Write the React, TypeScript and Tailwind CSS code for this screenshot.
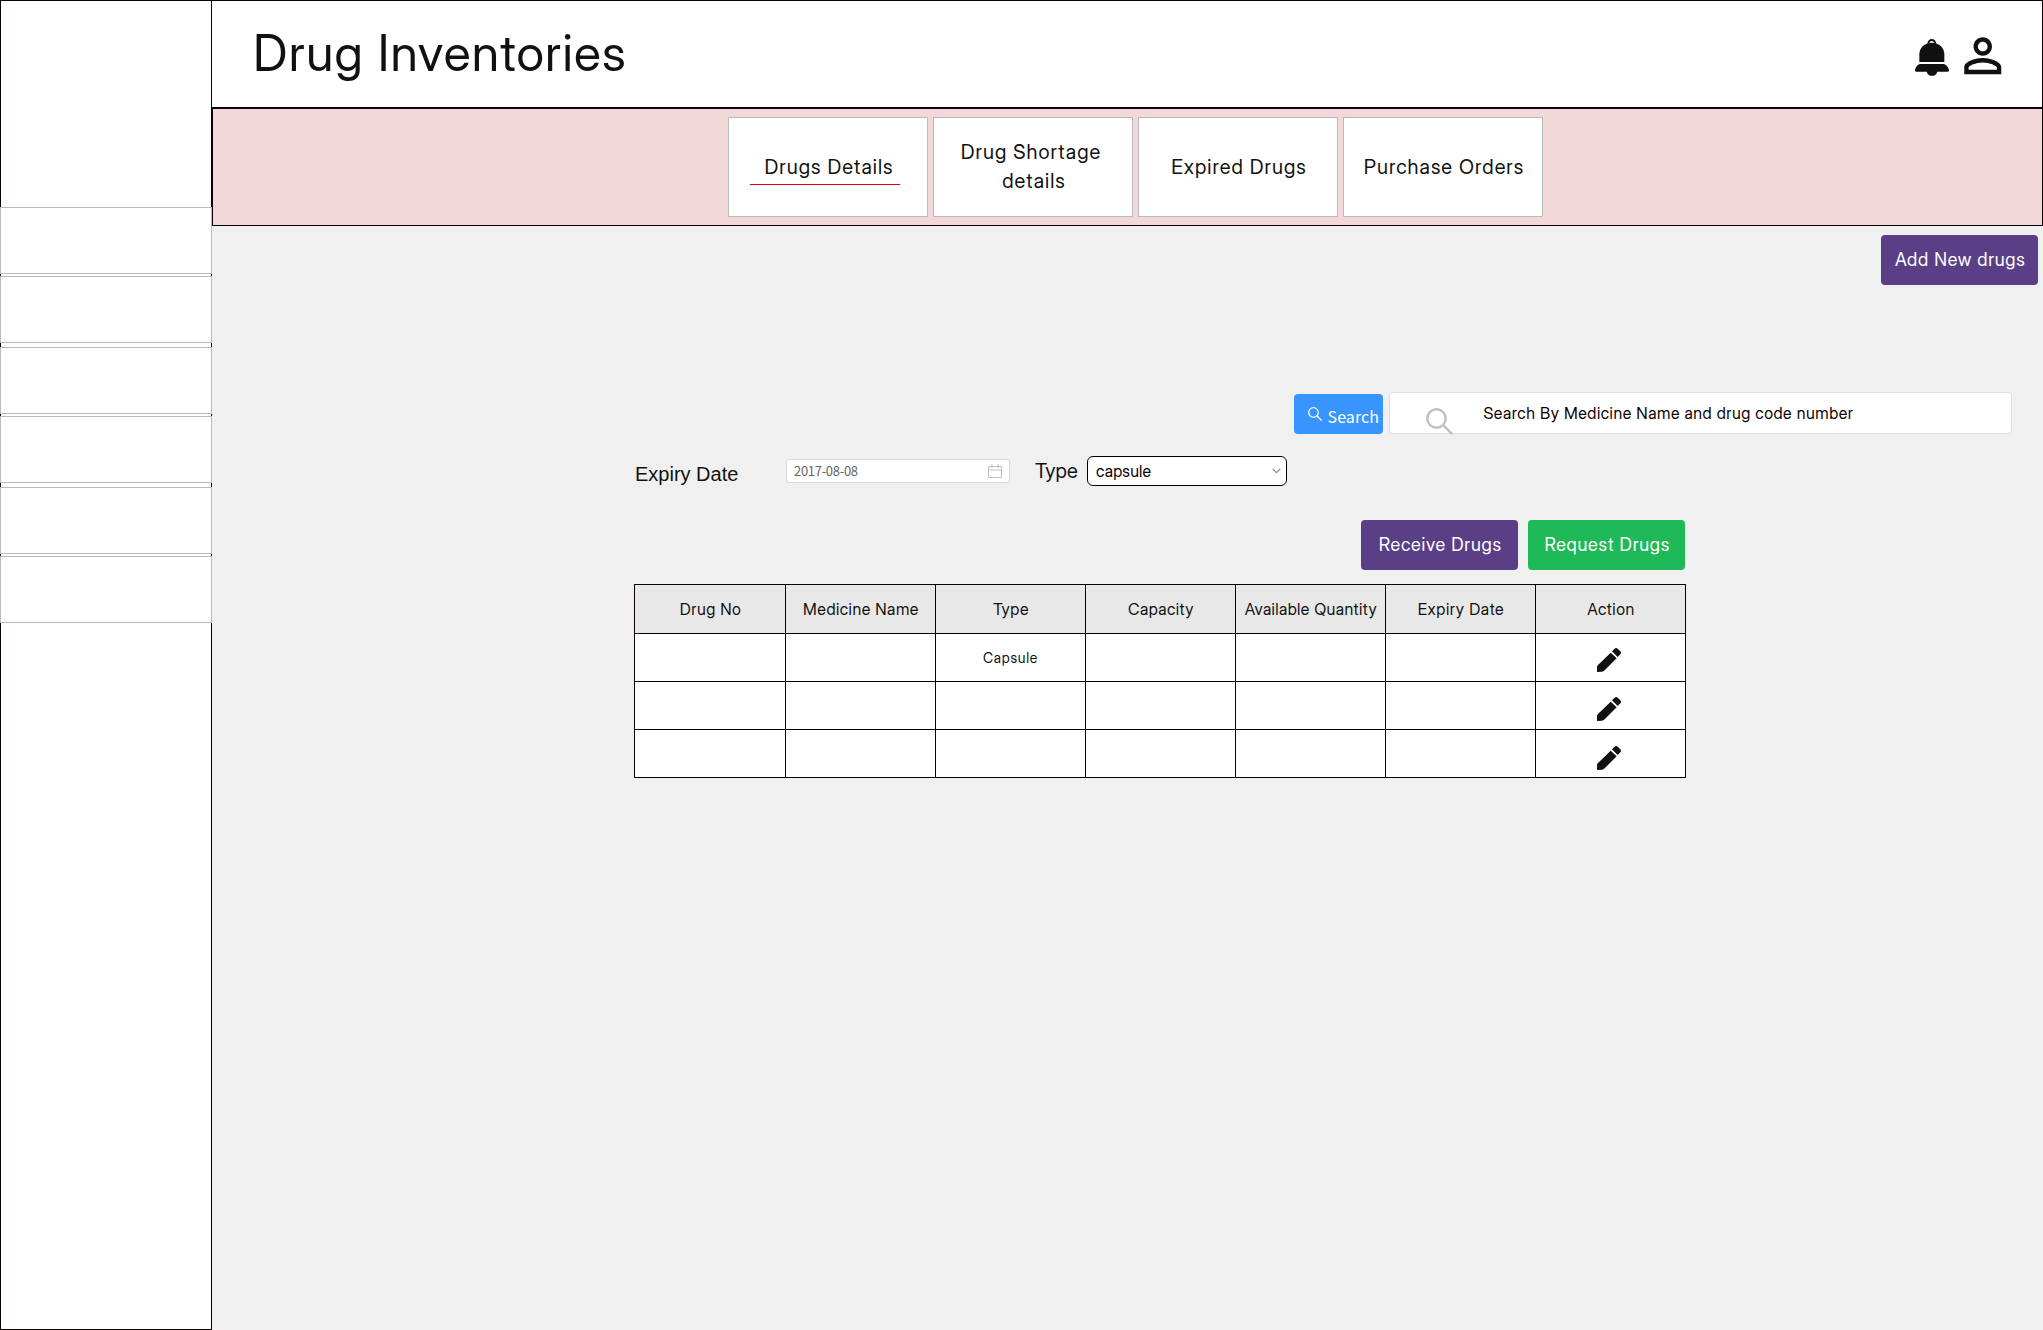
import React from "react";

const navGaps = ["mt-[206px]", "mt-[2px]", "mt-[4px]", "mt-[2px]", "mt-[4px]", "mt-[2px]"];

const columns = [
  { name: "Drug No", tracking: "tracking-[0.5px]" },
  { name: "Medicine Name", tracking: "tracking-[0.5px]" },
  { name: "Type", tracking: "tracking-[0.6px]" },
  { name: "Capacity", tracking: "tracking-[0.4px]" },
  { name: "Available Quantity", tracking: "tracking-[0.4px]" },
  { name: "Expiry Date", tracking: "tracking-[0.6px]" },
  { name: "Action", tracking: "tracking-[0.5px]" },
];

const rows = [
  { type: "Capsule", iconOffset: "mt-[14px]" },
  { type: "", iconOffset: "mt-[15px]" },
  { type: "", iconOffset: "mt-[16px]" },
];

function Bell() {
  return (
    <svg className="mt-[38px] h-[37px] w-[34px]" viewBox="0 0 102 111" fill="#111">
      <path d="M40 14a10.500 11 0 0 1 21 0" fill="none" stroke="#111" strokeWidth="6" />
      <path d="M13 69V46C13 26 29 11 50.500 11S88 26 88 46v23z" />
      <path d="M14 75h73c8 3 14 10 15 19 0 3-1 4-4 4H67a16.500 16.500 0 0 1-32 0H4c-3 0-4-1-4-4 1-9 6-16 14-19z" />
    </svg>
  );
}

function Person() {
  return (
    <svg className="mt-[27px] h-[55.5px] w-[55.5px]" viewBox="0 0 24 24" fill="#111">
      <path d="M12 5.900c1.160 0 2.100.94 2.100 2.100s-.94 2.100-2.100 2.100S9.900 9.160 9.900 8s.94-2.100 2.100-2.100m0 9c2.970 0 6.100 1.460 6.100 2.100v1.100H5.900V17c0-.64 3.130-2.100 6.100-2.100M12 4C9.790 4 8 5.790 8 8s1.790 4 4 4 4-1.790 4-4-1.790-4-4-4zm0 9c-2.670 0-8 1.340-8 4v3h16v-3c0-2.660-5.330-4-8-4z" />
    </svg>
  );
}

function Pencil({ className }: { className: string }) {
  return (
    <svg className={`ml-[61px] h-[24px] w-[24px] ${className}`} viewBox="0 0 72 72" fill="#111">
      <path d="M41 14 59 31 23 67Q19 71 15 71L0 72V56Q0 54 3 51Z" />
      <path d="M45 10 52 3Q57-2 62 2L70 10Q74 15 70 19L62 27Z" />
    </svg>
  );
}

function Magnifier({ className, stroke }: { className: string; stroke: number }) {
  return (
    <svg className={className} viewBox="0 0 27 27" fill="none" stroke="currentColor" strokeWidth={stroke}>
      <circle cx="10.500" cy="10.500" r="9.200" />
      <path d="m17 17 9.200 9.200" />
    </svg>
  );
}

function Tab({ children, active }: { children: React.ReactNode; active?: boolean }) {
  return (
    <div className="relative flex h-[100px] w-[200px] items-center justify-center border border-[#bababa] bg-white pl-[2px] text-center text-xl leading-[29px] tracking-[1px] whitespace-pre-wrap text-[#111]">
      <span>{children}</span>
      {active && <div className="absolute top-[66px] left-[21px] h-px w-[150px] bg-[#e00000]" />}
    </div>
  );
}

function Action({ children, color }: { children: React.ReactNode; color: string }) {
  return (
    <button className={`h-[50px] w-[157px] rounded pl-[1.5px] text-lg leading-[50px] tracking-[0.75px] whitespace-nowrap text-white ${color}`}>
      {children}
    </button>
  );
}

export default function App() {
  return (
    <div className="flex h-[1330px] w-[2043px] overflow-hidden bg-[#f0f0f0] font-['Inter_Display','Inter',sans-serif]">
      <aside className="h-full w-[212px] shrink-0 border border-[#0c0003] bg-white">
        {navGaps.map((gap, i) => (
          <div key={i} className={`-mx-px h-[67px] border border-[#bababa] bg-white ${gap}`} />
        ))}
      </aside>

      <main className="flex w-[1831px] flex-col">
        <header className="flex h-[108px] items-start border-t border-r border-b border-[#0c0003] bg-white">
          <h1 className="mt-[22px] ml-[41px] text-[50px] leading-[60px] tracking-[1.2px] text-[#111]">Drug Inventories</h1>
          <div className="mr-[32px] ml-auto flex items-start gap-[6px]">
            <Bell />
            <Person />
          </div>
        </header>

        <nav className="flex h-[118px] gap-[5px] border border-[#0c0003] bg-[#f3d8d9] pt-[8px] pl-[515px]">
          <Tab active>Drugs Details</Tab>
          <Tab>{"Drug Shortage \ndetails"}</Tab>
          <Tab>Expired Drugs</Tab>
          <Tab>Purchase Orders</Tab>
        </nav>

        <div className="mt-[9px] mr-[5px] flex justify-end">
          <Action color="bg-[#5a3f87]">Add New drugs</Action>
        </div>

        <div className="mt-[107px] mr-[31px] flex items-end justify-end gap-[6px]">
          <button className="flex h-[40px] w-[89px] items-start rounded bg-[#3894ff] pl-[13.5px] text-white">
            <Magnifier className="mt-[13px] h-[14px] w-[14px]" stroke={2.4} />
            <span className="mt-[2px] ml-[6px] font-['Noto_Sans_CJK_SC',sans-serif] text-base leading-[40px] tracking-[0.1px]">Search</span>
          </button>
          <div className="flex h-[42px] w-[623px] items-start rounded border border-[#dcdfe6] bg-white">
            <Magnifier className="mt-[14.5px] ml-[35.5px] h-[27px] w-[27px] text-[#bfbfbf]" stroke={2.4} />
            <span className="ml-[31px] text-base leading-[40px] tracking-[0.52px] text-[#0c0003]">
              Search By Medicine Name and drug code number
            </span>
          </div>
        </div>

        <div className="mt-[22px] ml-[423px] flex h-[30px] items-start">
          <label className="mt-[3px] w-[151px] font-['Liberation_Sans',sans-serif] text-xl leading-[30px] text-[#111]">Expiry Date</label>
          <div className="mt-[3px] flex h-[24px] w-[224px] items-center justify-between rounded-[3px] border border-[#d9d9d9] bg-white pr-[7px] pl-[7px]">
            <span className="font-['Noto_Sans_CJK_SC',sans-serif] text-[13px] leading-[22px] tracking-[-0.3px] text-[#666]">2017-08-08</span>
            <svg className="h-[14px] w-[14px]" viewBox="0 0 14 14" fill="none" stroke="#bfbfbf">
              <path d="M.5 2.500h13v11H.5zM.5 6h13M4 0v4M10 0v4" />
            </svg>
          </div>
          <label className="ml-[25px] w-[52px] text-xl leading-[30px] tracking-[0.2px] text-[#111]">Type</label>
          <div className="flex h-[30px] w-[200px] items-center justify-between rounded-md border border-black bg-white pr-[5px] pl-[8px] text-[#0c0003]">
            <span className="text-base leading-[28px] tracking-[0.2px]">capsule</span>
            <svg className="h-[6px] w-[9px]" viewBox="0 0 9 6" fill="none" stroke="#888" strokeWidth="1.200">
              <path d="m.7.9 3.800 3.800L8.300.9" />
            </svg>
          </div>
        </div>

        <div className="mt-[34px] mr-[358px] flex justify-end gap-[10px]">
          <Action color="bg-[#5a3f87]">Receive Drugs</Action>
          <Action color="bg-[#1fb957]">Request Drugs</Action>
        </div>

        <div className="mt-[14px] ml-[422px] grid w-[1052px] grid-cols-[150px_repeat(6,149px)] gap-px bg-[#0c0003] p-px text-[#111]">
          {columns.map(({ name, tracking }) => (
            <div key={name} className={`h-[48px] bg-[#e8e8e8] pl-px text-center text-base leading-[48px] whitespace-nowrap ${tracking}`}>
              {name}
            </div>
          ))}
          {rows.map((row, r) =>
            columns.map(({ name }, c) => (
              <div key={`${r}-${name}`} className="h-[47px] bg-white text-center text-sm leading-[47px] tracking-[0.7px]">
                {c === 2 && row.type}
                {c === 6 && <Pencil className={row.iconOffset} />}
              </div>
            )),
          )}
        </div>
      </main>
    </div>
  );
}
